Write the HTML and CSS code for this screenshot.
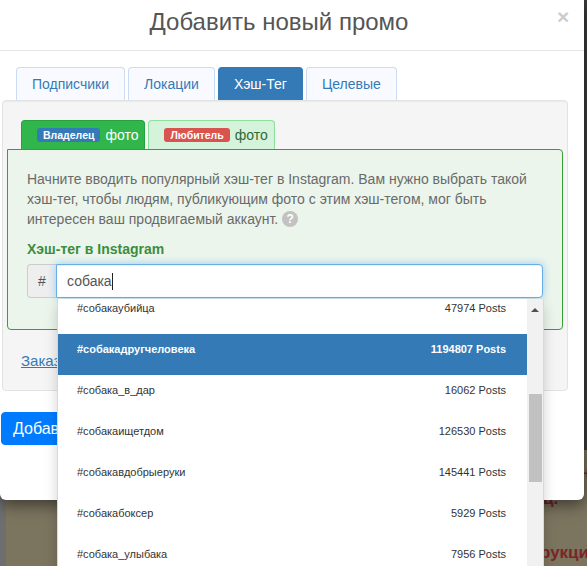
FILE: index.html
```html
<!DOCTYPE html>
<html lang="ru">
<head>
<meta charset="utf-8">
<title>Добавить новый промо</title>
<link rel="stylesheet" href="styles.css">
</head>
<body>
<div class="backdrop">
  <span class="bg-text bg-text-1">н</span>
  <span class="bg-text bg-text-2">ц.</span>
  <span class="bg-text bg-text-3">рукцин</span>
</div>
<div class="modal">
  <div class="modal-header">
    <h4 class="modal-title">Добавить новый промо</h4>
    <button class="close" type="button">×</button>
  </div>
  <div class="modal-body">
    <ul class="nav-tabs">
      <li class="tab">Подписчики</li>
      <li class="tab">Локации</li>
      <li class="tab active">Хэш-Тег</li>
      <li class="tab">Целевые</li>
    </ul>
    <div class="well">
      <ul class="photo-tabs">
        <li class="photo-tab owner"><span class="label label-blue">Владелец</span>фото</li>
        <li class="photo-tab fan"><span class="label label-red">Любитель</span>фото</li>
      </ul>
      <div class="hash-panel">
        <p class="hint">Начните вводить популярный хэш-тег в Instagram. Вам нужно выбрать такой<br>хэш-тег, чтобы людям, публикующим фото с этим хэш-тегом, мог быть<br>интересен ваш продвигаемый аккаунт. <span class="help">?</span></p>
        <label class="field-label">Хэш-тег в Instagram</label>
        <div class="input-group">
          <span class="addon">#</span>
          <div class="input">собака<span class="caret"></span></div>
          <div class="dropdown">
            <ul class="suggestions">
              <li class="item first"><span>#собакаубийца</span><span>47974 Posts</span></li>
              <li class="item active"><span>#собакадругчеловека</span><span>1194807 Posts</span></li>
              <li class="item"><span>#собака_в_дар</span><span>16062 Posts</span></li>
              <li class="item"><span>#собакаищетдом</span><span>126530 Posts</span></li>
              <li class="item"><span>#собакавдобрыеруки</span><span>145441 Posts</span></li>
              <li class="item"><span>#собакабоксер</span><span>5929 Posts</span></li>
              <li class="item"><span>#собака_улыбака</span><span>7956 Posts</span></li>
            </ul>
            <div class="scrollbar"><span class="arrow-up"></span><span class="thumb"></span></div>
          </div>
        </div>
      </div>
      <a class="order-link" href="#">Заказать продвижение</a>
    </div>
    <button class="btn-add" type="button">Добавить</button>
  </div>
</div>
</body>
</html>
```
FILE: styles.css
```css
html, body {
  margin: 0;
  padding: 0;
}
body {
  width: 587px;
  height: 566px;
  overflow: hidden;
  position: relative;
  font-family: "Liberation Sans", Arial, sans-serif;
  background:
    linear-gradient(to right, #6e6e6e 0 6px, transparent 6px),
    linear-gradient(#3b3b3b 0 450px, #7b745f 450px);
}
.backdrop {
  position: absolute;
  inset: 0;
}
.bg-text {
  position: absolute;
  font-weight: bold;
  font-size: 17px;
  color: #7a2626;
}
.bg-text-1 { left: 580px; top: 463px; }
.bg-text-2 { left: 543px; top: 489px; }
.bg-text-3 { left: 540px; top: 543px; }

.modal {
  position: relative;
  z-index: 1;
  width: 584px;
  height: 500px;
  background: #fff;
  border-radius: 0 0 6px 6px;
  box-shadow: 0 5px 15px rgba(0, 0, 0, .5);
}
.modal-header {
  display: flex;
  align-items: flex-start;
  border-bottom: 1px solid #e5e5e5;
  padding-top: 9px;
  box-sizing: content-box;
  height: 41px;
}
.modal-title {
  flex: 1;
  margin: 0;
  text-align: center;
  font-size: 24px;
  line-height: 26px;
  font-weight: normal;
  color: #555;
}
.close {
  width: 10px;
  margin: -3px 16px 0 0;
  padding: 0;
  border: 0;
  background: none;
  font-family: inherit;
  font-size: 21px;
  line-height: 21px;
  font-weight: bold;
  color: #000;
  opacity: .2;
  display: flex;
  justify-content: center;
}
.modal-body {
  padding: 16px 16px 0 2px;
}
.nav-tabs {
  display: flex;
  gap: 3px;
  list-style: none;
  margin: 0 0 0 14px;
  padding: 0;
}
.tab {
  padding: 6px 15px;
  font-size: 14px;
  line-height: 20px;
  color: #337ab7;
  background: #f8faff;
  border: 1px solid #c9dbf5;
  border-bottom: 0;
  border-radius: 4px 4px 0 0;
}
.tab.active {
  background: #337ab7;
  border-color: #337ab7;
  color: #fff;
}
.well {
  background: #f5f5f5;
  border: 1px solid #e3e3e3;
  border-radius: 4px;
  padding: 19px 4px 19px;
  box-shadow: inset 0 1px 1px rgba(0, 0, 0, .05);
}
.photo-tabs {
  display: flex;
  gap: 3px;
  list-style: none;
  margin: 0 0 0 14px;
  padding: 0;
}
.photo-tab {
  display: flex;
  align-items: center;
  height: 29px;
  box-sizing: border-box;
  padding: 0 6px 0 15px;
  border: 1px solid;
  border-bottom: 0;
  border-radius: 4px 4px 0 0;
  font-size: 14px;
}
.owner {
  background: #31b64c;
  border-color: #27a040;
  color: #fff;
}
.fan {
  background: #d4f3da;
  border-color: #8ddf9d;
  color: #2f6a3a;
}
.label {
  font-size: 10.5px;
  font-weight: bold;
  line-height: 10px;
  color: #fff;
  padding: 2px 6px;
  border-radius: 3px;
  margin-right: 5px;
}
.label-blue { background: #337ab7; }
.label-red { background: #d9534f; }
.hash-panel {
  border: 1px solid #36a036;
  background: #ebf5ec;
  border-radius: 0 4px 4px 4px;
  padding: 19px 19px 31px;
}
.hint {
  margin: 0 0 10px;
  font-size: 14px;
  line-height: 20px;
  color: #6a6a6a;
}
.help {
  display: inline-block;
  width: 16px;
  height: 16px;
  margin-top: 2px;
  border-radius: 50%;
  background: #c2c2c2;
  color: #fff;
  font-size: 12px;
  font-weight: bold;
  line-height: 16px;
  text-align: center;
  vertical-align: top;
}
.field-label {
  display: block;
  margin-bottom: 5px;
  font-size: 14px;
  line-height: 20px;
  font-weight: bold;
  color: #3c8d3c;
}
.input-group {
  display: flex;
  position: relative;
}
.addon {
  width: 29px;
  height: 34px;
  box-sizing: border-box;
  display: flex;
  align-items: center;
  justify-content: center;
  background: #eee;
  border: 1px solid #ccc;
  border-right: 0;
  border-radius: 4px 0 0 4px;
  color: #555;
  font-size: 14px;
}
.input {
  flex: 1;
  height: 34px;
  box-sizing: border-box;
  padding: 6px 10px;
  border: 1px solid #66afe9;
  border-radius: 0 4px 4px 0;
  box-shadow: inset 0 1px 1px rgba(0, 0, 0, .075), 0 0 8px rgba(102, 175, 233, .6);
  background: #fff;
  font-size: 14px;
  line-height: 20px;
  color: #555;
}
.caret {
  display: inline-block;
  width: 1px;
  height: 17px;
  background: #222;
  vertical-align: -4px;
}
.dropdown {
  position: absolute;
  top: 35px;
  left: 30px;
  width: 487px;
  height: 300px;
  box-sizing: border-box;
  display: flex;
  background: #fff;
  border: 1px solid rgba(0, 0, 0, .15);
  border-top: 0;
  box-shadow: 0 6px 12px rgba(0, 0, 0, .175);
  z-index: 5;
}
.suggestions {
  flex: 1;
  list-style: none;
  margin: 0;
  padding: 0;
}
.item {
  display: flex;
  justify-content: space-between;
  height: 41px;
  box-sizing: border-box;
  padding: 7px 21px 0 19px;
  font-size: 11px;
  line-height: 16px;
  color: #333;
}
.item.first {
  height: 35px;
  padding-top: 1px;
}
.item.active {
  background: #337ab7;
  color: #fff;
  font-weight: bold;
}
.scrollbar {
  width: 16px;
  background: #f1f1f1;
  display: flex;
  flex-direction: column;
  align-items: center;
}
.arrow-up {
  width: 0;
  height: 0;
  margin-top: 9px;
  border-left: 4px solid transparent;
  border-right: 4px solid transparent;
  border-bottom: 4px solid #505050;
}
.thumb {
  width: 13px;
  height: 88px;
  margin-top: 82px;
  background: #c1c1c1;
}
.order-link {
  display: block;
  width: fit-content;
  margin: 21px 0 0 14px;
  font-size: 15px;
  line-height: 20px;
  color: #337ab7;
  text-decoration: underline;
}
.btn-add {
  display: block;
  height: 33px;
  margin: 21px 0 0 -1px;
  padding: 0 11px;
  background: #007bff;
  border: 1px solid #007bff;
  border-radius: 4px;
  color: #fff;
  font-family: inherit;
  font-size: 16px;
}
```
